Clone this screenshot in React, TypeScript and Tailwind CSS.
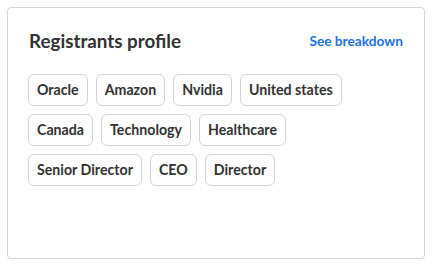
import React from "react";

const chips = [
  "Oracle",
  "Amazon",
  "Nvidia",
  "United states",
  "Canada",
  "Technology",
  "Healthcare",
  "Senior Director",
  "CEO",
  "Director",
];

export default function App() {
  return (
    <div className="w-[432px] h-[264px] bg-white p-[7px]" style={{ fontFamily: "Lato, 'Noto Sans', sans-serif" }}>
      <div className="w-[418px] h-[252px] border border-[#d6d6d6] rounded-[4px] pl-[20px] pr-[21px] pt-[21px]">
        <div className="flex items-center justify-between h-[24px]">
          <span className="text-[18.8px] font-bold text-[#333333] leading-none ml-[1px]">Registrants profile</span>
          <span className="text-[13.7px] font-bold text-[#1a73e8] leading-none">See breakdown</span>
        </div>
        <div className="mt-[21px] flex flex-wrap gap-[8px] w-[330px]">
          {chips.map((c) => (
            <span
              key={c}
              className="h-[32px] px-[8px] flex items-center border border-[#d4d4d4] rounded-[6px] text-[14.2px] font-bold text-[#333333]"
            >
              {c}
            </span>
          ))}
        </div>
      </div>
    </div>
  );
}
